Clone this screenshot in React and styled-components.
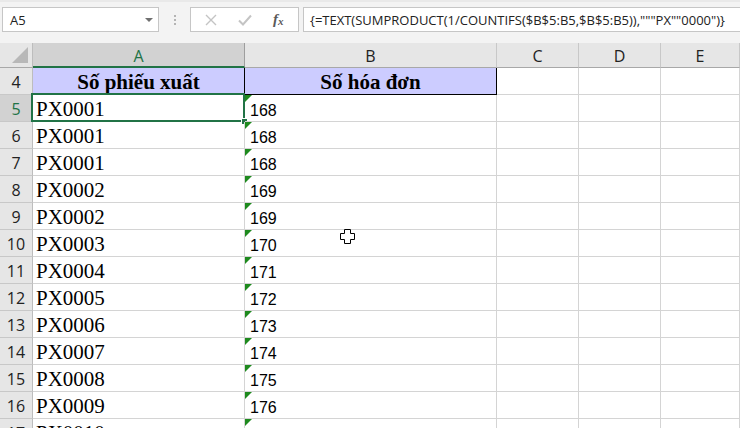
import styled, { createGlobalStyle } from 'styled-components';

const GlobalStyle = createGlobalStyle`
  html, body {
    margin: 0;
    padding: 0;
    width: 740px;
    height: 428px;
    overflow: hidden;
    background: #ffffff;
  }
`;

const Page = styled.div`
  width: 740px;
  height: 428px;
  overflow: hidden;
  position: relative;
  font-family: 'Open Sans', 'Liberation Sans', sans-serif;
`;

const TopBar = styled.div`
  height: 43px;
  box-sizing: border-box;
  background: #f3f3f3;
  border-top: 2px solid #e9e9e9;
  padding-top: 5px;
  display: flex;
  align-items: flex-start;
`;

const NameBox = styled.div`
  margin-left: 2px;
  width: 157px;
  height: 25px;
  box-sizing: border-box;
  background: #fff;
  border: 1px solid #c6c6c6;
  display: flex;
  align-items: center;
  justify-content: space-between;
  padding: 0 5px 0 7px;
  font-size: 13px;
  color: #222;
`;

const Caret = styled.span`
  width: 0;
  height: 0;
  border-left: 4px solid transparent;
  border-right: 4px solid transparent;
  border-top: 4px solid #707070;
`;

const Dots = styled.div`
  width: 31px;
  height: 25px;
  display: flex;
  flex-direction: column;
  align-items: center;
  justify-content: center;
  gap: 2px;

  span {
    width: 2px;
    height: 2px;
    background: #b4b4b4;
  }
`;

const FxBox = styled.div`
  width: 109px;
  height: 25px;
  box-sizing: border-box;
  background: #fff;
  border: 1px solid #c6c6c6;
  display: flex;
  align-items: center;
  justify-content: space-around;
  padding: 0 4px;
`;

const FxText = styled.span`
  font-family: 'Liberation Serif', serif;
  font-style: italic;
  font-weight: bold;
  font-size: 15px;
  color: #5a5a5a;

  sub {
    font-size: 11px;
    vertical-align: -1px;
  }
`;

const FormulaBox = styled.div`
  margin-left: 4px;
  flex: 1;
  height: 25px;
  box-sizing: border-box;
  background: #fff;
  border: 1px solid #c6c6c6;
  border-right: none;
  display: flex;
  align-items: center;
  padding-left: 6px;
  font-size: 13px;
  color: #222;
  white-space: nowrap;
  overflow: hidden;
`;

const Sheet = styled.div`
  display: grid;
  grid-template-columns: 33px 212px 252px 82px 82px 1fr;
  grid-auto-rows: 27px;
  grid-template-rows: 25px;
`;

const Corner = styled.div`
  background: #e6e6e6;
  border-right: 1px solid #bdbdbd;
  border-bottom: 1px solid #a8a8a8;
  box-sizing: border-box;
  position: relative;

  &::after {
    content: '';
    position: absolute;
    right: 4px;
    bottom: 4px;
    width: 0;
    height: 0;
    border-left: 16px solid transparent;
    border-bottom: 16px solid #b8b8b8;
  }
`;

const ColHead = styled.div`
  box-sizing: border-box;
  background: ${(p) => (p.$active ? '#d2d2d2' : '#e6e6e6')};
  border-right: 1px solid ${(p) => (p.$active ? '#9e9e9e' : '#c8c8c8')};
  border-bottom: ${(p) => (p.$active ? '2px solid #217346' : '1px solid #a8a8a8')};
  color: ${(p) => (p.$active ? '#217346' : '#222')};
  font-size: 16px;
  display: flex;
  align-items: center;
  justify-content: center;
  padding-top: 2px;
`;

const RowHead = styled.div`
  box-sizing: border-box;
  background: ${(p) => (p.$active ? '#d2d2d2' : '#e6e6e6')};
  border-right: 1px solid #bdbdbd;
  border-bottom: 1px solid #c8c8c8;
  color: ${(p) => (p.$active ? '#217346' : '#222')};
  font-size: 16px;
  display: flex;
  align-items: center;
  justify-content: center;
  padding-top: 2px;
`;

const Cell = styled.div`
  box-sizing: border-box;
  border-right: 1px solid #d4d4d4;
  border-bottom: 1px solid #d4d4d4;
  position: relative;
  display: flex;
  align-items: center;
  white-space: nowrap;
  overflow: visible;
`;

const TitleCell = styled(Cell)`
  background: #ccccff;
  border-right: 1px solid #000;
  border-bottom: 1px solid #000;
  justify-content: center;
  font-family: 'Liberation Serif', serif;
  font-weight: bold;
  font-size: 21px;
  color: #000;
  padding-top: 2px;
`;

const CodeCell = styled(Cell)`
  font-family: 'Liberation Serif', serif;
  font-size: 21px;
  color: #000;
  padding: 3px 0 0 3px;
`;

const NumCell = styled(Cell)`
  font-family: 'Liberation Sans', sans-serif;
  font-size: 16px;
  color: #000;
  padding: 5px 0 0 5px;

  &::before {
    content: '';
    position: absolute;
    left: 0;
    top: 0;
    width: 0;
    height: 0;
    border-top: 7px solid #1e8a1e;
    border-right: 7px solid transparent;
  }
`;

const Selection = styled.span`
  position: absolute;
  left: -2px;
  top: -2px;
  right: -1px;
  bottom: -1px;
  border: 2px solid #217346;
  pointer-events: none;

  &::after {
    content: '';
    position: absolute;
    right: -5px;
    bottom: -5px;
    width: 5px;
    height: 5px;
    background: #217346;
    border: 1px solid #fff;
  }
`;

const Cursor = styled.svg`
  position: absolute;
  left: 340px;
  top: 229px;
`;

const rows = [
  ['PX0001', 168],
  ['PX0001', 168],
  ['PX0001', 168],
  ['PX0002', 169],
  ['PX0002', 169],
  ['PX0003', 170],
  ['PX0004', 171],
  ['PX0005', 172],
  ['PX0006', 173],
  ['PX0007', 174],
  ['PX0008', 175],
  ['PX0009', 176],
  ['PX0010', 177],
];

const cols = ['A', 'B', 'C', 'D', 'E'];

const App = () => {
  return (
    <Page>
      <GlobalStyle />
      <TopBar>
        <NameBox>
          A5
          <Caret />
        </NameBox>
        <Dots>
          <span />
          <span />
          <span />
        </Dots>
        <FxBox>
          <svg width="12" height="12" viewBox="0 0 12 12">
            <path d="M1 1L11 11M11 1L1 11" stroke="#c4c4c4" strokeWidth="1.4" />
          </svg>
          <svg width="14" height="12" viewBox="0 0 14 12">
            <path d="M1 6.5L5 10.5L13 1.5" stroke="#c4c4c4" strokeWidth="2" fill="none" />
          </svg>
          <FxText>
            f<sub>x</sub>
          </FxText>
        </FxBox>
        <FormulaBox>{'{=TEXT(SUMPRODUCT(1/COUNTIFS($B$5:B5,$B$5:B5)),"""PX""0000")}'}</FormulaBox>
      </TopBar>

      <Sheet>
        <Corner />
        {cols.map((c) => (
          <ColHead key={c} $active={c === 'A'}>
            {c}
          </ColHead>
        ))}

        <RowHead>4</RowHead>
        <TitleCell>Số phiếu xuất</TitleCell>
        <TitleCell>Số hóa đơn</TitleCell>
        <Cell />
        <Cell />
        <Cell />

        {rows.map(([code, num], i) => (
          <Row key={i} n={i + 5} code={code} num={num} />
        ))}
      </Sheet>

      <Cursor width="15" height="15" viewBox="0 0 15 15">
        <path
          d="M4.5 0.5H10.5V4.5H14.5V10.5H10.5V14.5H4.5V10.5H0.5V4.5H4.5Z"
          fill="#fff"
          stroke="#000"
          strokeWidth="1"
        />
      </Cursor>
    </Page>
  );
};

const Row = ({ n, code, num }) => (
  <>
    <RowHead $active={n === 5}>{n}</RowHead>
    <CodeCell>
      {code}
      {n === 5 && <Selection />}
    </CodeCell>
    <NumCell>{num}</NumCell>
    <Cell />
    <Cell />
    <Cell />
  </>
);

export default App;
